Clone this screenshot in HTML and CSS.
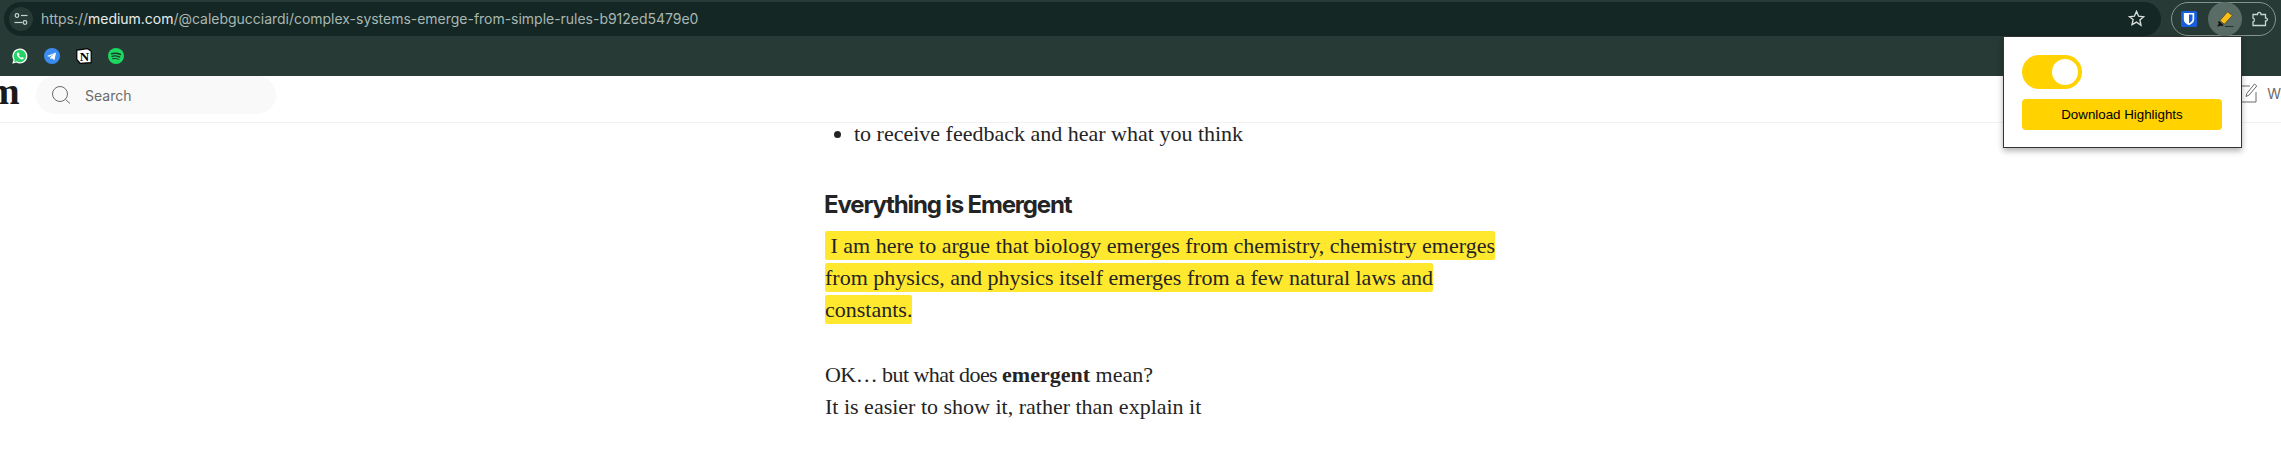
FILE: index.html
```html
<!DOCTYPE html>
<html>
<head>
    <title>Complex Systems Emerge from Simple Rules</title>
    <link rel="stylesheet" href="styles.css">
</head>
<body>
    <div class="toolbar">
        <div class="address-bar">
            <span class="site-info">
                <svg width="16" height="16" viewBox="0 0 16 16" fill="none" stroke="#c6d2ce" stroke-width="1.2">
                    <circle cx="4" cy="4.5" r="1.8"/>
                    <path d="M8 4.500h6.500"/>
                    <circle cx="12" cy="11.500" r="1.800"/>
                    <path d="M1.500 11.500h8"/>
                </svg>
            </span>
            <span class="url">https://<b>medium.com</b>/@calebgucciardi/complex-systems-emerge-from-simple-rules-b912ed5479e0</span>
            <svg class="star" width="17" height="17" viewBox="0 0 16 16" fill="none" stroke="#d5dedb" stroke-width="1.300">
                <path d="M8 1.300l2 4.500 4.800.5-3.600 3.200 1 4.800L8 11.400l-4.200 2.400 1-4.800L1.200 6.300 6 5.800z"/>
            </svg>
        </div>
        <div class="extensions">
            <span class="ext-icon">
                <svg width="16" height="16" viewBox="0 0 16 16">
                    <rect width="16" height="16" rx="1.500" fill="#175ddc"/>
                    <path d="M2.800 2h10.400v6.200c0 3-2.700 4.800-5.200 5.900-2.500-1.100-5.200-2.900-5.200-5.900z" fill="#fff"/>
                    <path d="M8 3.600h3.500v4.600c0 1.900-1.800 3.100-3.500 4z" fill="#175ddc"/>
                </svg>
            </span>
            <span class="ext-icon active">
                <svg width="18" height="18" viewBox="0 0 18 18">
                    <path d="M1 16.500l3-.4 1.200-1.400-1.800-1.800z" fill="#111"/>
                    <path d="M3 11l4.500 4.200-1.800 1-3.800-3.800z" fill="#111"/>
                    <path d="M4 10.500L11.500 1.800l4.800 3.700-8 8.700z" fill="#f7bd1a" stroke="#3a3010" stroke-width=".6"/>
                    <path d="M9 16.500h8.500" stroke="#23302c" stroke-width="1"/>
                </svg>
            </span>
            <span class="ext-icon">
                <svg width="18" height="18" viewBox="0 0 18 18" fill="none" stroke="#c4d8d2" stroke-width="1.300">
                    <path d="M2 4.500h4.500c-.4-2.800 3.900-2.800 3.500 0H14.500v3.500c2.500-.3 2.500 3.300 0 3v4.500H2v-3.500c1.800 0 1.800-4 0-4z"/>
                </svg>
            </span>
        </div>
    </div>

    <div class="bookmarks">
        <svg width="16" height="16" viewBox="0 0 16 16">
            <path d="M.3 15.700l1.100-3.900A7.500 7.500 0 1 1 4.300 14.600z" fill="#fff"/>
            <path d="M2 14l.7-2.500A6.200 6.200 0 1 1 4.600 13.300z" fill="#25d366"/>
            <path d="M5.600 4.400c-.9.800-1 2.100-.1 3.500 1 1.600 2.400 2.900 4 3.400 1.100.3 2-.3 2.300-1.300l-1.700-1-.8.800c-1-.4-1.900-1.300-2.400-2.400l.7-.8-.9-1.800z" fill="#fff"/>
        </svg>
        <svg width="16" height="16" viewBox="0 0 16 16">
            <circle cx="8" cy="8" r="8" fill="#3a8cf0"/>
            <path d="M3 8l9-3.600-1.500 7.800-2.700-2-1.300 1.300-.3-2.300 3.900-3.200-5 2.800z" fill="#fff"/>
        </svg>
        <svg width="16" height="16" viewBox="0 0 16 16">
            <path d="M.8 2.200L11.500.6l3.700 2.700v11.300l-11 .8L.8 11.500z" fill="#fff" stroke="#000" stroke-width="1.200"/>
            <text x="8.400" y="12.600" class="notion-n">N</text>
        </svg>
        <svg width="16" height="16" viewBox="0 0 16 16" fill="none" stroke="#1c3a2a" stroke-linecap="round">
            <circle cx="8" cy="8" r="8" fill="#1ed760" stroke="none"/>
            <path d="M3.500 5.700c3-.8 6.200-.6 9 .8" stroke-width="1.400"/>
            <path d="M4 8.300c2.600-.7 5.200-.4 7.800.8" stroke-width="1.200"/>
            <path d="M4.500 10.700c2.200-.5 4.300-.3 6.400.7" stroke-width="1"/>
        </svg>
    </div>

    <div class="page">
        <div class="top-nav">
            <span class="logo">m</span>
            <div class="search">
                <svg width="20" height="20" viewBox="0 0 20 20" fill="none" stroke="#6b6b6b" stroke-width="1">
                    <circle cx="9" cy="9" r="7.500"/>
                    <path d="M14.500 14.500l4.500 4"/>
                </svg>
                <span>Search</span>
            </div>
            <div class="write">
                <svg width="20" height="20" viewBox="0 0 20 20" fill="none" stroke="#6b6b6b" stroke-width="1">
                    <path d="M11 3H2v16h15v-10"/>
                    <path d="M7 13.500l.8-3L15.500 1l2.300 2-7.700 9z"/>
                </svg>
                <span>Write</span>
            </div>
        </div>

        <div class="article">
            <ul>
                <li>to receive feedback and hear what you think</li>
            </ul>
            <h2>Everything is Emergent</h2>
            <p class="highlighted"><mark>&nbsp;I am here to argue that biology emerges from chemistry, chemistry emerges<br>from physics, and physics itself emerges from a few natural laws and<br>constants.</mark></p>
            <p><span class="tight">OK… but what does </span><strong>emergent</strong> mean?<br>It is easier to show it, rather than explain it</p>
        </div>

        <div class="popup">
            <div class="switch"><span class="knob"></span></div>
            <button>Download Highlights</button>
        </div>
    </div>
</body>
</html>
```

FILE: styles.css
```css
html, body {
    margin: 0;
    height: 100%;
    overflow: hidden;
}
body {
    background-color: #fff;
    font-family: "Liberation Sans", Arial, sans-serif;
}
.toolbar {
    background-color: #273a35;
    height: 36px;
    display: flex;
    align-items: center;
    padding-left: 4px;
    box-sizing: border-box;
}
.address-bar {
    background-color: #142724;
    height: 34px;
    width: 2157px;
    flex: none;
    margin-top: 1px;
    border-radius: 17px;
    display: flex;
    align-items: center;
    padding-left: 5px;
    box-sizing: border-box;
}
.site-info {
    width: 24px;
    height: 24px;
    border-radius: 50%;
    background-color: #273a35;
    display: flex;
    align-items: center;
    justify-content: center;
}
.url {
    margin-left: 8px;
    font-family: Inter, "Liberation Sans", sans-serif;
    font-size: 14px;
    letter-spacing: -0.02px;
    color: #a9b7b3;
}
.url b {
    font-weight: 400;
    color: #e8eeec;
}
.star {
    margin-left: auto;
    margin-right: 16px;
}
.extensions {
    margin-left: 10px;
    margin-top: 1px;
    width: 105px;
    height: 34px;
    flex: none;
    border: 1px solid #84938e;
    border-radius: 17px;
    box-sizing: border-box;
    display: flex;
    align-items: center;
    padding-left: 8px;
}
.ext-icon {
    display: flex;
    align-items: center;
    justify-content: center;
    width: 18px;
    height: 32px;
}
.ext-icon.active {
    width: 34px;
    height: 34px;
    border-radius: 50%;
    background-color: #5a6c66;
    margin-left: 10px;
    margin-right: 9px;
}
.bookmarks {
    background-color: #273a35;
    height: 40px;
    display: flex;
    align-items: center;
    gap: 16px;
    padding-left: 12px;
}
.notion-n {
    font-family: "Liberation Serif", serif;
    font-weight: bold;
    font-size: 13px;
    text-anchor: middle;
}
.page {
    position: relative;
}
.top-nav {
    height: 46px;
    border-bottom: 1px solid #f2f2f2;
    background-color: #fff;
    position: relative;
    display: flex;
    align-items: flex-start;
    overflow: hidden;
}
.logo {
    font-family: "Liberation Serif", serif;
    font-weight: bold;
    font-size: 38px;
    line-height: 30px;
    color: #1a1a1a;
    margin-left: -12px;
    margin-right: -12px;
    flex: none;
    width: 60px;
}
.search {
    width: 240px;
    height: 38px;
    border-radius: 19px;
    background-color: #f9f9f9;
    display: flex;
    align-items: center;
    gap: 14px;
    padding-left: 15px;
    box-sizing: border-box;
    font-family: Inter, "Liberation Sans", sans-serif;
    font-size: 14px;
    color: #6b6b6b;
}
.write {
    margin-left: auto;
    margin-right: -21px;
    margin-top: 7px;
    display: flex;
    align-items: center;
    gap: 8px;
    font-family: Inter, "Liberation Sans", sans-serif;
    font-size: 14px;
    color: #6b6b6b;
}
.article {
    margin: -5px 0 0 825px;
    font-family: "Liberation Serif", serif;
    font-size: 22px;
    line-height: 32px;
    color: #242424;
}
ul {
    margin: 0;
    padding: 0 0 0 29px;
}
h2 {
    margin: 40px 0 0 -1px;
    font-family: Inter, "Liberation Sans", sans-serif;
    font-size: 24px;
    line-height: 30px;
    font-weight: 700;
    letter-spacing: -1.15px;
}
p {
    margin: 0;
}
.highlighted {
    margin-top: 10px;
    margin-bottom: 33px;
}
mark {
    background-color: #ffe82e;
    color: inherit;
    padding: 2px 0;
    border-radius: 2px;
    box-decoration-break: clone;
    -webkit-box-decoration-break: clone;
}
.tight {
    letter-spacing: -0.55px;
}
strong {
    font-weight: 700;
}
.popup {
    position: absolute;
    top: -40px;
    left: 2003px;
    width: 239px;
    height: 112px;
    box-sizing: border-box;
    background-color: #fff;
    border: 1px solid #333;
    box-shadow: 0 3px 6px rgba(0,0,0,0.3);
    padding: 18px;
}
.switch {
    width: 60px;
    height: 34px;
    border-radius: 17px;
    background-color: #ffd200;
    position: relative;
}
.knob {
    position: absolute;
    top: 4px;
    right: 4px;
    width: 26px;
    height: 26px;
    border-radius: 50%;
    background-color: #fff;
}
button {
    display: block;
    margin-top: 10px;
    width: 200px;
    height: 31px;
    border: none;
    border-radius: 4px;
    background-color: #ffd200;
    color: #000;
    font-family: "Liberation Sans", Arial, sans-serif;
    font-size: 13.33px;
    cursor: pointer;
}
```
